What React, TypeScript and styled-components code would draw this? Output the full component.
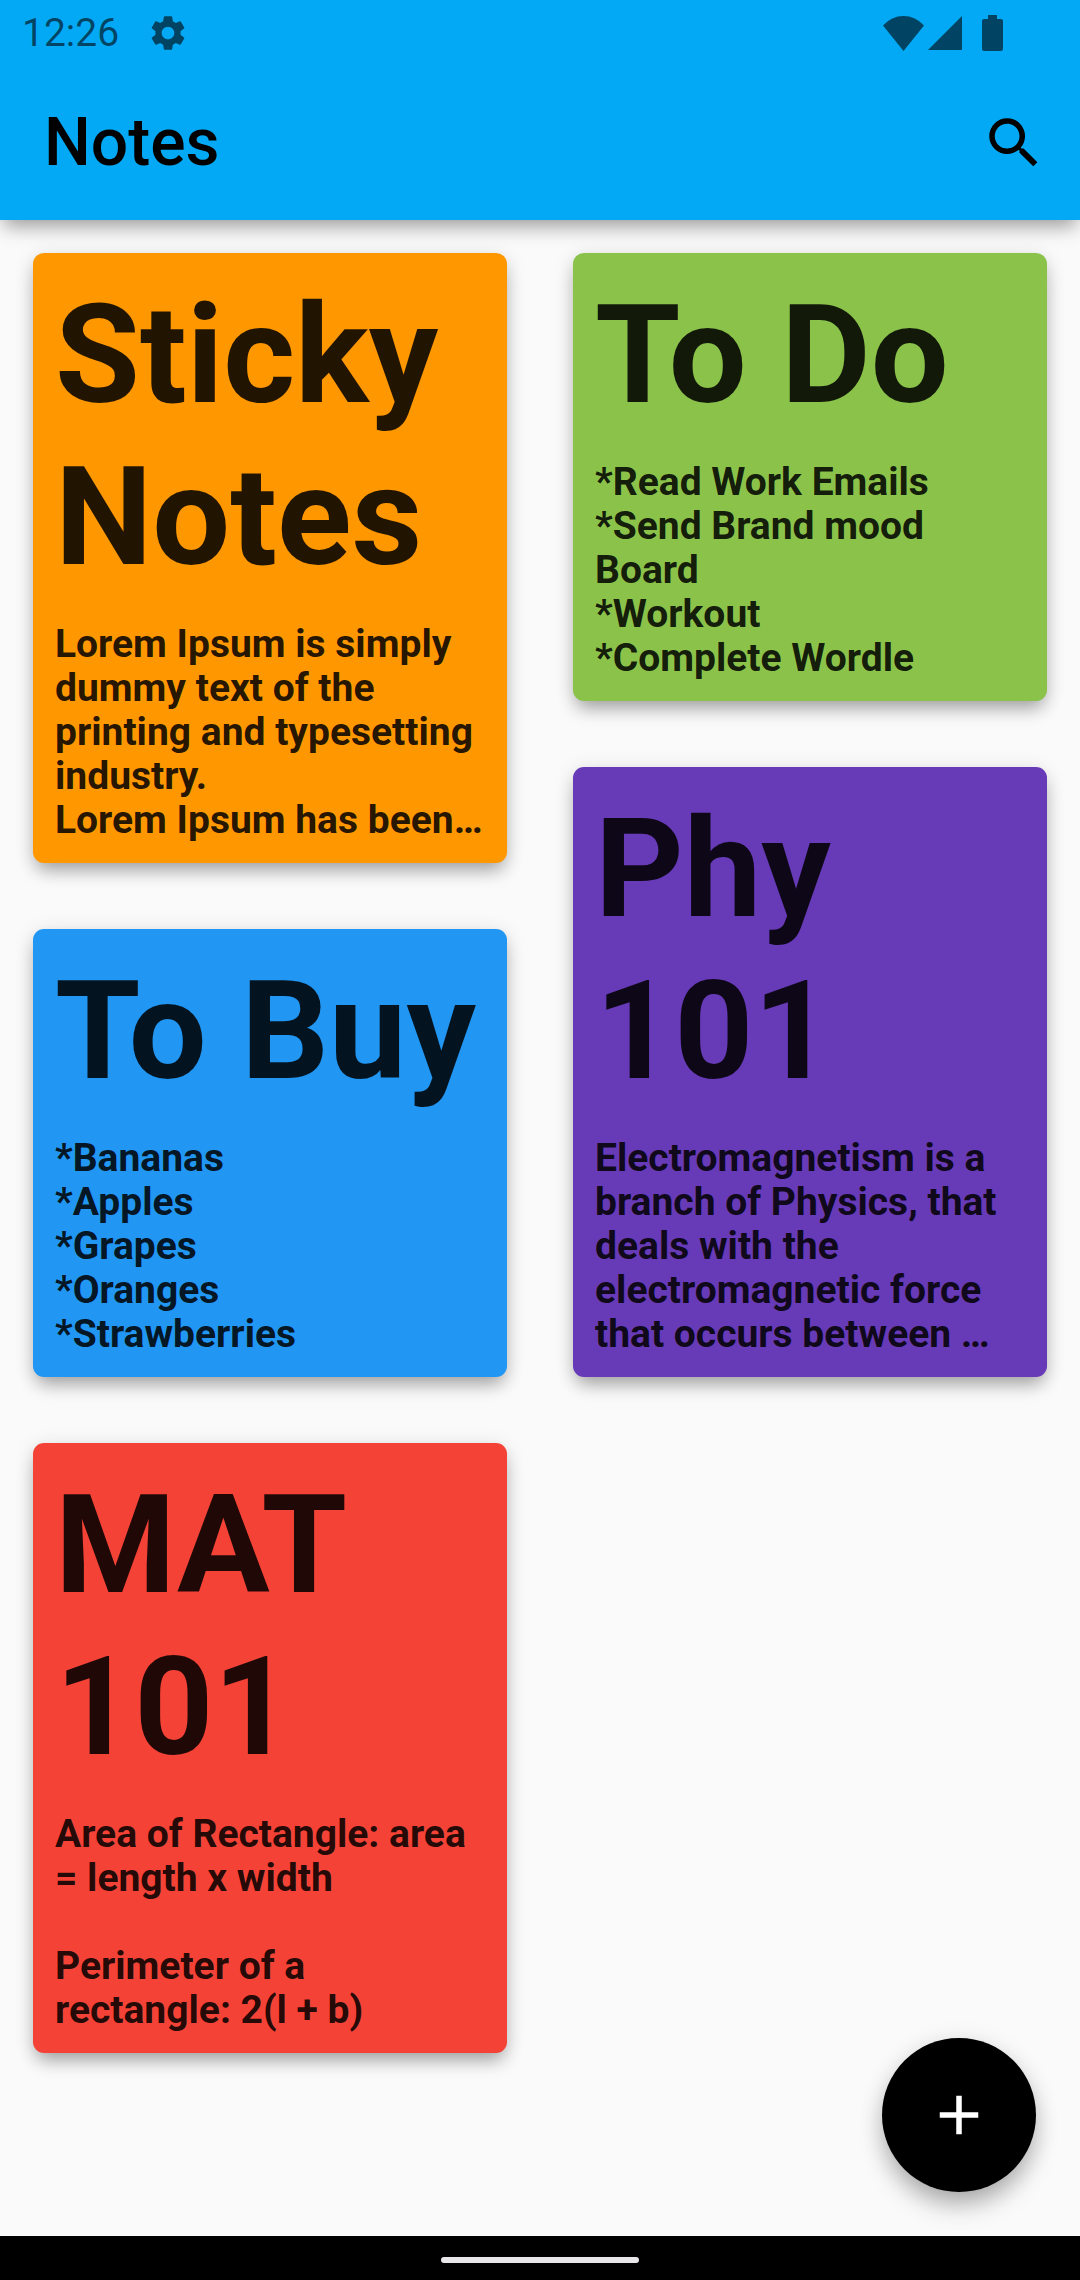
import React from "react";
import styled, { createGlobalStyle } from "styled-components";
import { MdAdd, MdSearch, MdSettings } from "react-icons/md";

const GlobalStyle = createGlobalStyle`
  *, *::before, *::after {
    box-sizing: border-box;
  }

  body {
    margin: 0;
    background: #fafafa;
    font-family: Roboto, "Noto Sans", sans-serif;
  }

  h1, h2, p {
    margin: 0;
  }
`;

const Screen = styled.div`
  display: flex;
  flex-direction: column;
  min-height: 100vh;
`;

const Header = styled.header`
  z-index: 1;
  background: #03a9f4;
  box-shadow:
    0 11px 18px -4px rgba(0, 0, 0, 0.3),
    0 3px 20px -2px rgba(0, 0, 0, 0.12);
`;

const StatusBar = styled.div`
  display: flex;
  align-items: center;
  justify-content: space-between;
  height: 66px;
  padding: 0 77px 0 22px;
  color: rgba(0, 0, 0, 0.6);
`;

const StatusGroup = styled.div<{ $gap: number }>`
  display: flex;
  align-items: center;
  gap: ${({ $gap }) => $gap}px;

  svg {
    display: block;
  }
`;

const Clock = styled.time`
  font-size: 39px;
  line-height: 44px;
`;

const Toolbar = styled.div`
  display: flex;
  align-items: center;
  justify-content: space-between;
  height: 154px;
  padding-left: 44px;
`;

const AppTitle = styled.h1`
  font-size: 66px;
  font-weight: 500;
  line-height: 78px;
  color: #000;
`;

const IconButton = styled.button`
  display: grid;
  place-items: center;
  width: 132px;
  height: 132px;
  padding: 0;
  border: 0;
  background: none;
  color: #000;
  cursor: pointer;
`;

const Main = styled.main`
  position: relative;
  display: grid;
  flex: 1;
  grid-template-columns: repeat(2, minmax(0, 1fr));
  align-items: start;
  gap: 66px;
  padding: 33px 33px 176px;
`;

const Column = styled.div`
  display: flex;
  flex-direction: column;
  gap: 66px;
`;

const Card = styled.article<{ $color: string }>`
  display: flex;
  flex-direction: column;
  gap: 24px;
  padding: 21px 22px;
  border-radius: 11px;
  background: ${({ $color }) => $color};
  color: rgba(0, 0, 0, 0.87);
  box-shadow:
    0 11px 18px -4px rgba(0, 0, 0, 0.3),
    0 3px 20px rgba(0, 0, 0, 0.12);
`;

const CardTitle = styled.h2`
  font-size: 138px;
  font-weight: 700;
  line-height: 162px;
`;

const CardBody = styled.p`
  font-size: 39px;
  font-weight: 700;
  line-height: 44px;
  white-space: pre-line;
`;

const AddButton = styled.button`
  position: absolute;
  right: 44px;
  bottom: 44px;
  display: grid;
  place-items: center;
  width: 154px;
  height: 154px;
  padding: 0;
  border: 0;
  border-radius: 50%;
  background: #000;
  color: #fff;
  cursor: pointer;
  box-shadow:
    0 16px 26px -4px rgba(0, 0, 0, 0.28),
    0 4px 24px rgba(0, 0, 0, 0.12);
`;

const SystemNav = styled.footer`
  z-index: 1;
  display: flex;
  justify-content: center;
  height: 44px;
  padding-top: 21px;
  background: #000;
`;

const HomeIndicator = styled.div`
  width: 198px;
  height: 6px;
  border-radius: 3px;
  background: #e8e6e9;
`;

interface Note {
  title: string;
  body: string;
  color: string;
}

const columns: Note[][] = [
  [
    {
      title: "Sticky Notes",
      body: "Lorem Ipsum is simply dummy text of the printing and typesetting industry.\nLorem Ipsum has been…",
      color: "#ff9800",
    },
    {
      title: "To Buy",
      body: "*Bananas\n*Apples\n*Grapes\n*Oranges\n*Strawberries",
      color: "#2196f3",
    },
    {
      title: "MAT 101",
      body: "Area of Rectangle: area = length x width\n\nPerimeter of a rectangle: 2(l + b)",
      color: "#f44336",
    },
  ],
  [
    {
      title: "To Do",
      body: "*Read Work Emails\n*Send Brand mood Board\n*Workout\n*Complete Wordle",
      color: "#8bc34a",
    },
    {
      title: "Phy 101",
      body: "Electromagnetism is a branch of Physics, that deals with the electromagnetic force that occurs between …",
      color: "#673ab7",
    },
  ],
];

const WifiIcon = () => (
  <svg width="41" height="35" viewBox="0 0 41 35" fill="currentColor" aria-hidden="true">
    <path d="M0 9.5Q8.5 0 20.500 0Q32.500 0 41 9.500L20.500 35Z" />
  </svg>
);

const SignalIcon = () => (
  <svg width="34" height="34" viewBox="0 0 34 34" fill="currentColor" aria-hidden="true">
    <path d="M34 0V34H0Z" />
  </svg>
);

const BatteryIcon = () => (
  <svg width="21" height="36" viewBox="0 0 21 36" fill="currentColor" aria-hidden="true">
    <path d="M6 0H15V4H19Q21 4 21 6V34Q21 36 19 36H2Q0 36 0 34V6Q0 4 2 4H6Z" />
  </svg>
);

export default function App() {
  return (
    <Screen>
      <GlobalStyle />
      <Header>
        <StatusBar>
          <StatusGroup $gap={28}>
            <Clock>12:26</Clock>
            <MdSettings size={42} aria-hidden="true" />
          </StatusGroup>
          <StatusGroup $gap={20}>
            <StatusGroup $gap={4}>
              <WifiIcon />
              <SignalIcon />
            </StatusGroup>
            <BatteryIcon />
          </StatusGroup>
        </StatusBar>
        <Toolbar>
          <AppTitle>Notes</AppTitle>
          <IconButton type="button" aria-label="Search">
            <MdSearch size={66} />
          </IconButton>
        </Toolbar>
      </Header>
      <Main>
        {columns.map((notes, index) => (
          <Column key={index}>
            {notes.map((note) => (
              <Card key={note.title} $color={note.color}>
                <CardTitle>{note.title}</CardTitle>
                <CardBody>{note.body}</CardBody>
              </Card>
            ))}
          </Column>
        ))}
        <AddButton type="button" aria-label="Add note">
          <MdAdd size={66} />
        </AddButton>
      </Main>
      <SystemNav>
        <HomeIndicator />
      </SystemNav>
    </Screen>
  );
}
